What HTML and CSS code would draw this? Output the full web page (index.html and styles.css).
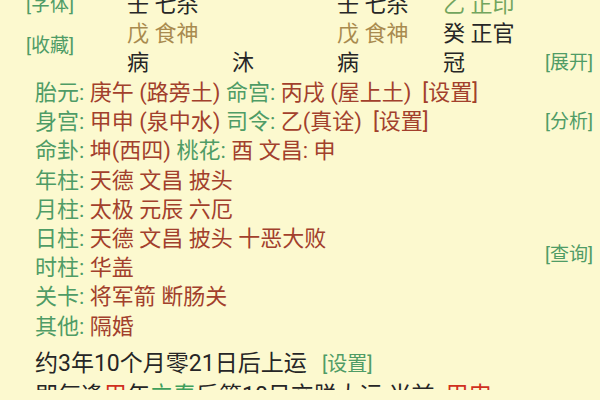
FILE: index.html
```html
<!DOCTYPE html>
<html lang="zh-CN">
  <head>
    <meta charset="UTF-8" />
    <meta name="viewport" content="width=device-width, initial-scale=1.0" />
    <title>命盘</title>
    <link rel="stylesheet" href="styles.css">
  </head>
  <body>
    <div class="page">
      <!-- 四柱 -->
      <div class="pillars">
        <div class="link side-top">[字体]</div>
        <div class="link side-mid">[收藏]</div>
        <div class="cell c1 r1 dark">壬 七杀</div>
        <div class="cell c3 r1 dark">壬 七杀</div>
        <div class="cell c4 r1 leaf">乙 正印</div>
        <div class="cell c1 r2 gold">戊 食神</div>
        <div class="cell c3 r2 gold">戊 食神</div>
        <div class="cell c4 r2 dark">癸 正官</div>
        <div class="cell c1 r3 dark">病</div>
        <div class="cell c2 r3 dark">沐</div>
        <div class="cell c3 r3 dark">病</div>
        <div class="cell c4 r3 dark">冠</div>
        <div class="link side-right">[展开]</div>
      </div>

      <!-- 神煞 -->
      <div class="details">
        <div class="line"><span class="key">胎元:</span> <span class="val">庚午 (路旁土)</span> <span class="key">命宫:</span> <span class="val">丙戌 (屋上土)</span> <span class="val">&nbsp;[设置]</span></div>
        <div class="line"><span class="key">身宫:</span> <span class="val">甲申 (泉中水)</span> <span class="key">司令:</span> <span class="val">乙(真诠)</span> <span class="val">&nbsp;[设置]</span></div>
        <div class="line"><span class="key">命卦:</span> <span class="val">坤(西四)</span> <span class="key">桃花:</span> <span class="val">酉 文昌:</span> <span class="val">申</span></div>
        <div class="line"><span class="key">年柱:</span> <span class="val">天德 文昌 披头</span></div>
        <div class="line"><span class="key">月柱:</span> <span class="val">太极 元辰 六厄</span></div>
        <div class="line"><span class="key">日柱:</span> <span class="val">天德 文昌 披头 十恶大败</span></div>
        <div class="line"><span class="key">时柱:</span> <span class="val">华盖</span></div>
        <div class="line"><span class="key">关卡:</span> <span class="val">将军箭 断肠关</span></div>
        <div class="line"><span class="key">其他:</span> <span class="val">隔婚</span></div>
        <div class="link analyse">[分析]</div>
        <div class="link query">[查询]</div>
      </div>

      <!-- 大运 -->
      <div class="luck">
        <div class="line">约3年10个月零21日后上运 &nbsp;<span class="link small">[设置]</span></div>
        <div class="line">即每逢<span class="red">甲</span>年<span class="green">立春</span>后第10日交脱大运 当前: <span class="red">甲申</span></div>
      </div>
    </div>
  </body>
</html>
```

FILE: styles.css
```css
/* General */
body {
  margin: 0;
  background-color: #fcf9cf;
  font-family: Roboto, "Noto Sans CJK SC", sans-serif;
  color: #262626;
  overflow: hidden;
}

.page {
  height: 400px;
}

.link {
  color: #4f9c66;
  font-size: 19px;
}

/* Top pillars */
.pillars {
  display: grid;
  grid-template-columns: 101px 105px 105px 106px 1fr auto;
  grid-template-rows: repeat(3, 29px);
  padding-left: 26px;
  padding-right: 7px;
  margin-top: -10px;
  font-size: 22px;
  line-height: 29px;
}

.c1 { grid-column: 2; }
.c2 { grid-column: 3; }
.c3 { grid-column: 4; }
.c4 { grid-column: 5; }
.r1 { grid-row: 1; }
.r2 { grid-row: 2; }
.r3 { grid-row: 3; }

.side-top {
  grid-column: 1;
  grid-row: 1;
}

.side-mid {
  grid-column: 1;
  grid-row: 2 / span 2;
  align-self: center;
  margin-bottom: 6px;
}

.side-right {
  grid-column: 6;
  grid-row: 3;
}

.dark { color: #262626; }
.gold { color: #a98b4f; }
.leaf { color: #72a55e; }

/* Detail rows */
.details {
  display: grid;
  grid-template-columns: 1fr auto;
  grid-auto-rows: 29.2px;
  padding: 0 7px 0 35px;
  margin-top: 1px;
  font-size: 22px;
  line-height: 29px;
}

.details .line {
  grid-column: 1;
  white-space: nowrap;
}

.key { color: #4f9c66; }
.val { color: #a2402c; }

.analyse {
  grid-column: 2;
  grid-row: 2;
}

.query {
  grid-column: 2;
  grid-row: 6 / span 2;
  align-self: center;
  margin-top: 3px;
}

/* Luck */
.luck {
  padding-left: 35px;
  margin-top: 7px;
  font-size: 23px;
  line-height: 31px;
}

.luck .line {
  white-space: nowrap;
}

.luck .small {
  font-size: 20px;
  margin-left: 4px;
}

.red { color: #d0301e; }
.green { color: #3f9f5c; }
```
